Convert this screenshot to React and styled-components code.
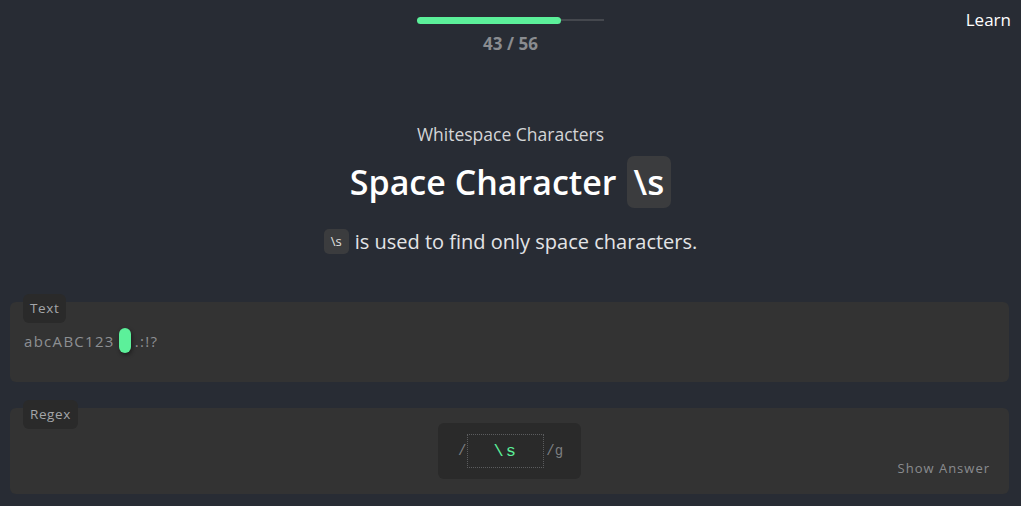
import React from 'react';
import styled, { createGlobalStyle } from 'styled-components';

const GlobalStyle = createGlobalStyle`
  body {
    margin: 0;
    background: #282c34;
    font-family: 'Open Sans', 'Noto Sans', sans-serif;
    color: #fff;
  }
`;

const Page = styled.div`
  width: 1021px;
  height: 506px;
  overflow: hidden;
`;

const Header = styled.header`
  display: grid;
  grid-template-columns: 1fr 187px 1fr;
  padding-top: 16px;
`;

const Progress = styled.div`
  display: flex;
  flex-direction: column;
  align-items: center;
`;

const Track = styled.div`
  position: relative;
  width: 100%;
  height: 8px;
  display: flex;
  align-items: center;
  &::before {
    content: '';
    position: absolute;
    left: 0;
    right: 0;
    height: 2px;
    background: #45484e;
  }
`;

const Fill = styled.div`
  position: relative;
  height: 7px;
  border-radius: 4px;
  background: #5cf09a;
`;

const Count = styled.div`
  margin-top: 8px;
  font-size: 17px;
  font-weight: 700;
  color: #8a8c90;
`;

const LearnLink = styled.a`
  justify-self: end;
  margin-top: -8px;
  padding-right: 10px;
  font-size: 17px;
  color: #fff;
  text-decoration: none;
`;

const Intro = styled.section`
  display: flex;
  flex-direction: column;
  align-items: center;
  margin-top: 67px;
`;

const Subtitle = styled.div`
  font-size: 17.5px;
  color: #d4d5d7;
`;

const Title = styled.h1`
  display: flex;
  align-items: center;
  gap: 10px;
  margin: 10px 0 0;
  font-size: 34px;
  font-weight: 600;
  color: #fff;
`;

const Code = styled.code`
  font-family: 'Open Sans', 'Noto Sans', sans-serif;
  background: #3b3c3e;
  color: ${p => (p.$small ? '#e0e0e0' : '#fff')};
  border-radius: ${p => (p.$small ? '5px' : '7px')};
  font-size: ${p => (p.$small ? '13px' : '35px')};
  padding: ${p => (p.$small ? '3px 7px' : '0 7px')};
  line-height: ${p => (p.$small ? '19px' : '52px')};
`;

const Description = styled.p`
  display: flex;
  align-items: center;
  gap: 6px;
  margin: 20px 0 0;
  font-size: 20px;
  color: #e3e4e6;
`;

const Panels = styled.div`
  display: flex;
  flex-direction: column;
  gap: 26px;
  margin-top: 47px;
  padding: 0 12px 0 10px;
`;

const Panel = styled.div`
  position: relative;
  background: #333333;
  border-radius: 6px;
  height: ${p => p.$height}px;
  box-sizing: border-box;
`;

const Tag = styled.span`
  position: absolute;
  top: -8px;
  left: 13px;
  padding: 5px 7px 6px;
  background: #2a2a2a;
  border-radius: 6px;
  font-size: 13.5px;
  line-height: 18px;
  letter-spacing: 0.6px;
  color: #a4a6a9;
`;

const SampleText = styled.div`
  display: flex;
  align-items: center;
  padding: 26px 0 0 14px;
  font-size: 15px;
  letter-spacing: 1.3px;
  color: #8d8f92;
`;

const Match = styled.span`
  display: inline-block;
  width: 12px;
  height: 25px;
  margin: 0 4px 0 4px;
  border-radius: 6px;
  background: #5cf09a;
  box-shadow: 1px 2px 4px rgba(0, 0, 0, 0.45);
`;

const RegexRow = styled.div`
  display: flex;
  justify-content: center;
  padding-top: 15px;
`;

const RegexBox = styled.div`
  display: flex;
  align-items: center;
  height: 56px;
  padding: 0 18px 0 20px;
  background: #2a2a2a;
  border-radius: 6px;
  font-family: 'Liberation Mono', 'DejaVu Sans Mono', monospace;
  font-size: 14px;
  color: #7c7e81;
`;

const RegexInput = styled.div`
  display: flex;
  align-items: center;
  justify-content: center;
  width: 77px;
  height: 34px;
  margin: 0 2px 0 1px;
  box-sizing: border-box;
  border: 1px dotted #5b5c5e;
  color: #5cf09a;
  font-size: 17px;
  letter-spacing: 2px;
`;

const ShowAnswer = styled.button`
  position: absolute;
  right: 19px;
  bottom: 17px;
  padding: 0;
  border: none;
  background: none;
  font-family: 'Open Sans', 'Noto Sans', sans-serif;
  font-size: 13px;
  letter-spacing: 1px;
  color: #8a8c8f;
  cursor: pointer;
`;

export default function App() {
  const done = 43;
  const total = 56;
  return (
    <Page>
      <GlobalStyle />
      <Header>
        <span />
        <Progress>
          <Track>
            <Fill style={{ width: `${(done / total) * 100}%` }} />
          </Track>
          <Count>{done} / {total}</Count>
        </Progress>
        <LearnLink href="#">Learn</LearnLink>
      </Header>

      <Intro>
        <Subtitle>Whitespace Characters</Subtitle>
        <Title>
          Space Character <Code>\s</Code>
        </Title>
        <Description>
          <Code $small>\s</Code> is used to find only space characters.
        </Description>
      </Intro>

      <Panels>
        <Panel $height={80}>
          <Tag>Text</Tag>
          <SampleText>
            abcABC123<Match />.:!?
          </SampleText>
        </Panel>
        <Panel $height={86}>
          <Tag>Regex</Tag>
          <RegexRow>
            <RegexBox>
              /
              <RegexInput>\s</RegexInput>
              /g
            </RegexBox>
          </RegexRow>
          <ShowAnswer>Show Answer</ShowAnswer>
        </Panel>
      </Panels>
    </Page>
  );
}
